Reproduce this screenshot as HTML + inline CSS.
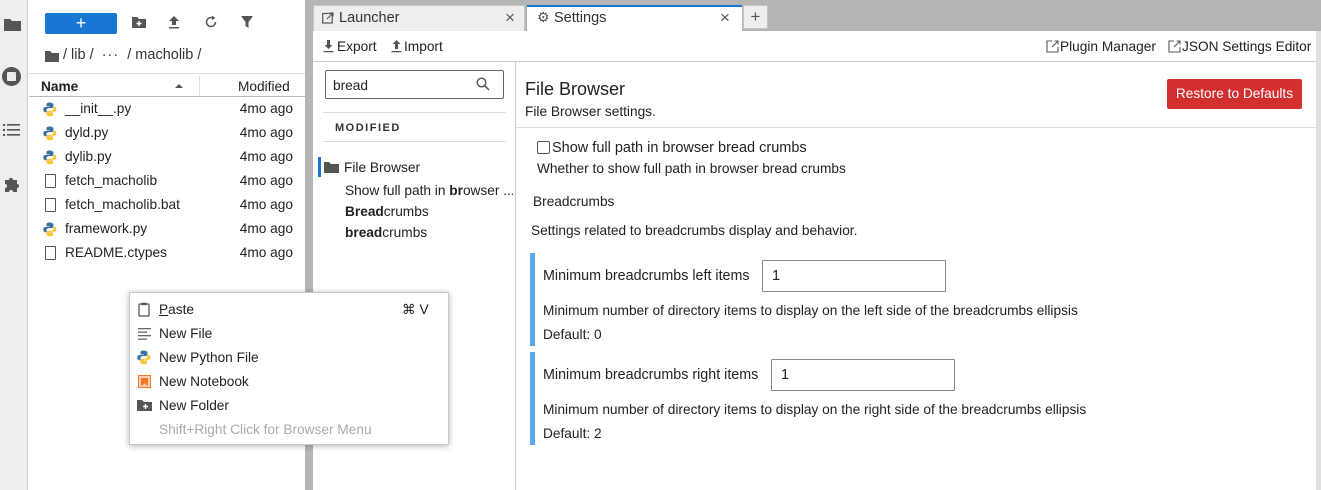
<!DOCTYPE html>
<html><head><style>
*{box-sizing:border-box;margin:0;padding:0}
body{width:1321px;height:490px;overflow:hidden;background:#fff;font-family:"Liberation Sans",sans-serif;font-size:13.7px;color:#222;position:relative}
.a{position:absolute}
.row{position:absolute;left:29px;width:276px;height:24px}
.row .n{position:absolute;left:36px;top:4px}
.row .m{position:absolute;right:12px;top:4px}
.py{position:absolute;left:14px;top:5px}
.fi{position:absolute;left:16px;top:5px;width:11px;height:14px;border:1.3px solid #555;border-radius:1px}
.mi{position:absolute;left:29px;font-size:13.7px}
</style></head><body>
<!-- left activity bar -->
<div class="a" style="left:0;top:0;width:28px;height:490px;background:#eeeeee;border-right:1px solid #ccc"></div>
<svg class="a" style="left:3px;top:16px" width="20" height="18"><path d="M1 3h6l2 2h9v10H1z" fill="#555"/></svg>
<div class="a" style="left:2px;top:67px;width:19px;height:19px;border-radius:50%;background:#555"></div>
<div class="a" style="left:7px;top:72px;width:9px;height:9px;background:#eee;border-radius:1px"></div>
<svg class="a" style="left:3px;top:123px" width="18" height="14"><g fill="#555"><rect x="0" y="1" width="2" height="2"/><rect x="0" y="6" width="2" height="2"/><rect x="0" y="11" width="2" height="2"/><rect x="4" y="1" width="13" height="1.6"/><rect x="4" y="6" width="13" height="1.6"/><rect x="4" y="11" width="13" height="1.6"/></g></svg>
<svg class="a" style="left:3px;top:175px" width="18" height="18"><path d="M2 5h4a2 2 0 1 1 4 0h4v4a2 2 0 1 1 0 4v4H10a2 2 0 1 0-4 0H2v-4a2 2 0 1 0 0-4z" fill="#555"/></svg>

<!-- file browser -->
<div class="a" style="left:45px;top:13px;width:72px;height:21px;background:#1976d2;border-radius:2px;color:#fff;text-align:center;font-size:18px;line-height:20px">+</div>
<svg class="a" style="left:131px;top:15px" width="16" height="14"><path d="M1 2h5l2 2h7v9H1z" fill="#555"/><path d="M8 6v5M5.5 8.5h5" stroke="#fff" stroke-width="1.5"/></svg>
<svg class="a" style="left:167px;top:14px" width="14" height="16"><path d="M7 2l5 5H9v4H5V7H2z M2 13h10v1.5H2z" fill="#555"/></svg>
<svg class="a" style="left:203px;top:14px" width="16" height="16"><path d="M12.5 8A4.5 4.5 0 1 1 10 4" fill="none" stroke="#555" stroke-width="1.5"/><path d="M9 1.5l3.5 2.5-3.5 2z" fill="#555"/></svg>
<svg class="a" style="left:240px;top:15px" width="14" height="14"><path d="M1 1h12L8.5 7v6L5.5 11V7z" fill="#555"/></svg>
<svg class="a" style="left:44px;top:49px" width="16" height="14"><path d="M1 2h5l2 2h7v9H1z" fill="#555"/></svg>
<div class="a" style="left:63px;top:47px;font-size:14.5px;color:#333">/ lib / &nbsp;<span style="letter-spacing:1px">···</span> &nbsp;/ macholib /</div>
<div class="a" style="left:29px;top:73px;width:276px;border-top:1px solid #ddd"></div>
<div class="a" style="left:41px;top:79px;font-weight:bold;font-size:13.7px">Name</div>
<div class="a" style="left:175px;top:84px;width:0;height:0;border-left:4px solid transparent;border-right:4px solid transparent;border-bottom:4px solid #555"></div>
<div class="a" style="left:199px;top:76px;height:20px;border-left:1px solid #ddd"></div>
<div class="a" style="left:238px;top:79px;font-size:13.7px">Modified</div>
<div class="a" style="left:29px;top:96px;width:276px;border-top:1px solid #bbb"></div>
<svg width="0" height="0" style="position:absolute"><defs><g id="py"><path d="M6.5 0.5c-3 0-3 1.3-3 2.3V4.5h3.2V5H2.3C1 5 0.3 6 0.3 7.5S1 10.2 2.3 10.2h1.2V8.3c0-1.3 1-2.2 2.2-2.2h3c1 0 1.8-.8 1.8-1.8V2.8c0-1-.9-2.3-4-2.3z" fill="#3b73a8"/><path d="M7.2 14.3c3 0 3-1.3 3-2.3v-1.7H7V9.8h4.4c1.3 0 2-1 2-2.5S12.7 4.6 11.4 4.6h-1.2v1.9c0 1.3-1 2.2-2.2 2.2H5c-1 0-1.8.8-1.8 1.8V12c0 1 .9 2.3 4 2.3z" fill="#f7c83e"/></g></defs></svg>
<div class="row" style="top:97px"><svg class="py" width="14" height="15"><use href="#py"/></svg><span class="n">__init__.py</span><span class="m">4mo ago</span></div>
<div class="row" style="top:121px"><svg class="py" width="14" height="15"><use href="#py"/></svg><span class="n">dyld.py</span><span class="m">4mo ago</span></div>
<div class="row" style="top:145px"><svg class="py" width="14" height="15"><use href="#py"/></svg><span class="n">dylib.py</span><span class="m">4mo ago</span></div>
<div class="row" style="top:169px"><div class="fi"></div><span class="n">fetch_macholib</span><span class="m">4mo ago</span></div>
<div class="row" style="top:193px"><div class="fi"></div><span class="n">fetch_macholib.bat</span><span class="m">4mo ago</span></div>
<div class="row" style="top:217px"><svg class="py" width="14" height="15"><use href="#py"/></svg><span class="n">framework.py</span><span class="m">4mo ago</span></div>
<div class="row" style="top:241px"><div class="fi"></div><span class="n">README.ctypes</span><span class="m">4mo ago</span></div>

<!-- splitter -->
<div class="a" style="left:305px;top:0;width:8px;height:490px;background:#b5b5b5"></div>
<!-- tab bar -->
<div class="a" style="left:313px;top:0;width:1008px;height:31px;background:#b5b5b5"></div>
<div class="a" style="left:313px;top:5px;width:212px;height:26px;background:#eeeeee;border:1px solid #c4c4c4;border-bottom:none"></div>
<svg class="a" style="left:322px;top:12px" width="12" height="12"><rect x="0.7" y="1.5" width="9.5" height="9.5" fill="none" stroke="#555" stroke-width="1.2"/><path d="M5 7L11 1M7.5 1H11V4.5" stroke="#555" stroke-width="1.2" fill="none"/></svg>
<div class="a" style="left:339px;top:10px;font-size:14.5px;color:#333">Launcher</div>
<div class="a" style="left:505px;top:8px;font-size:17px;color:#555">×</div>
<div class="a" style="left:527px;top:5px;width:215px;height:26px;background:#fff;border-top:2px solid #1976d2"></div>
<div class="a" style="left:537px;top:9px;font-size:14px;color:#555">⚙</div>
<div class="a" style="left:554px;top:10px;font-size:14.5px;color:#333">Settings</div>
<div class="a" style="left:720px;top:8px;font-size:17px;color:#555">×</div>
<div class="a" style="left:743px;top:5px;width:25px;height:24px;background:#eeeeee;border:1px solid #c4c4c4;text-align:center;font-size:17px;line-height:22px;color:#555">+</div>
<!-- main -->
<div class="a" style="left:313px;top:31px;width:1003px;height:459px;background:#fff"></div>
<div class="a" style="left:1316px;top:31px;width:5px;height:459px;background:#e0e0e0"></div>
<svg class="a" style="left:323px;top:40px" width="11" height="13"><path d="M5.5 9L1.5 5h2.5V0h3v5h2.5z M0.5 11h10v1.3H0.5z" fill="#555"/></svg>
<div class="a" style="left:337px;top:39px">Export</div>
<svg class="a" style="left:391px;top:40px" width="11" height="13"><path d="M5.5 0L1.5 4h2.5v5h3V4h2.5z M0.5 11h10v1.3H0.5z" fill="#555"/></svg>
<div class="a" style="left:404px;top:39px">Import</div>
<svg class="a" style="left:1046px;top:40px" width="13" height="13"><path d="M6 1H1v11h11V7" fill="none" stroke="#555" stroke-width="1.1"/><path d="M6 7l6-6M8.5 1H12v3.5" fill="none" stroke="#555" stroke-width="1.1"/></svg>
<div class="a" style="left:1060px;top:39px">Plugin Manager</div>
<svg class="a" style="left:1168px;top:40px" width="13" height="13"><path d="M6 1H1v11h11V7" fill="none" stroke="#555" stroke-width="1.1"/><path d="M6 7l6-6M8.5 1H12v3.5" fill="none" stroke="#555" stroke-width="1.1"/></svg>
<div class="a" style="left:1182px;top:39px">JSON Settings Editor</div>
<div class="a" style="left:313px;top:61px;width:1003px;border-top:1px solid #ccc"></div>
<!-- settings left -->
<div class="a" style="left:515px;top:62px;height:428px;border-left:1px solid #ccc"></div>
<div class="a" style="left:325px;top:70px;width:179px;height:29px;border:1px solid #666;border-radius:2px"></div>
<div class="a" style="left:333px;top:78px">bread</div>
<svg class="a" style="left:476px;top:77px" width="14" height="14"><circle cx="5.5" cy="5.5" r="4.3" fill="none" stroke="#555" stroke-width="1.4"/><path d="M8.7 8.7L13 13" stroke="#555" stroke-width="1.5"/></svg>
<div class="a" style="left:323px;top:112px;width:183px;border-top:1px solid #ddd"></div>
<div class="a" style="left:335px;top:122px;font-size:11px;font-weight:bold;letter-spacing:1.5px;color:#333">MODIFIED</div>
<div class="a" style="left:323px;top:141px;width:183px;border-top:1px solid #ddd"></div>
<div class="a" style="left:318px;top:157px;width:3px;height:20px;background:#1976d2"></div>
<svg class="a" style="left:324px;top:161px" width="16" height="13"><path d="M0 1h5l2 2h8v9H0z" fill="#555"/></svg>
<div class="a" style="left:344px;top:160px">File Browser</div>
<div class="a" style="left:345px;top:183px;white-space:nowrap;width:168px;overflow:hidden">Show full path in <b>br</b>owser ...</div>
<div class="a" style="left:345px;top:204px"><b>Bread</b>crumbs</div>
<div class="a" style="left:345px;top:225px"><b>bread</b>crumbs</div>
<!-- settings right -->
<div class="a" style="left:525px;top:79px;font-size:18px">File Browser</div>
<div class="a" style="left:525px;top:104px">File Browser settings.</div>
<div class="a" style="left:1167px;top:79px;width:135px;height:30px;background:#d32f2f;border-radius:2px;color:#fff;font-size:13.7px;text-align:center;line-height:30px">Restore to Defaults</div>
<div class="a" style="left:516px;top:127px;width:800px;border-top:1px solid #ddd"></div>
<div class="a" style="left:537px;top:141px;width:13px;height:13px;border:1px solid #555;border-radius:2px"></div>
<div class="a" style="left:552px;top:140px;font-size:14.5px">Show full path in browser bread crumbs</div>
<div class="a" style="left:537px;top:161px">Whether to show full path in browser bread crumbs</div>
<div class="a" style="left:533px;top:194px">Breadcrumbs</div>
<div class="a" style="left:531px;top:223px">Settings related to breadcrumbs display and behavior.</div>
<div class="a" style="left:530px;top:253px;width:5px;height:93px;background:#5aa9ee"></div>
<div class="a" style="left:543px;top:268px;font-size:14.3px">Minimum breadcrumbs left items</div>
<div class="a" style="left:762px;top:260px;width:184px;height:32px;border:1px solid #888;border-radius:1px;padding:7px 9px;font-size:14.5px">1</div>
<div class="a" style="left:543px;top:303px">Minimum number of directory items to display on the left side of the breadcrumbs ellipsis</div>
<div class="a" style="left:543px;top:327px">Default: 0</div>
<div class="a" style="left:530px;top:352px;width:5px;height:93px;background:#5aa9ee"></div>
<div class="a" style="left:543px;top:367px;font-size:14.3px">Minimum breadcrumbs right items</div>
<div class="a" style="left:771px;top:359px;width:184px;height:32px;border:1px solid #888;border-radius:1px;padding:7px 9px;font-size:14.5px">1</div>
<div class="a" style="left:543px;top:402px">Minimum number of directory items to display on the right side of the breadcrumbs ellipsis</div>
<div class="a" style="left:543px;top:426px">Default: 2</div>

<!-- context menu -->
<div class="a" style="left:129px;top:292px;width:320px;height:153px;background:#fff;border:1px solid #c8c8c8;box-shadow:0 1px 6px rgba(0,0,0,.3)">
 <svg class="a" style="left:8px;top:9px" width="12" height="15"><rect x="1" y="2" width="10" height="12" fill="none" stroke="#555" stroke-width="1.3" rx="1"/><rect x="3.5" y="0.7" width="5" height="2.5" fill="#555"/></svg>
 <div class="mi" style="top:9px"><u>P</u>aste</div>
 <div class="a" style="left:272px;top:9px">⌘ V</div>
 <svg class="a" style="left:8px;top:35px" width="13" height="12"><g fill="#666"><rect y="0" width="13" height="1.3"/><rect y="3.5" width="9" height="1.3"/><rect y="7" width="13" height="1.3"/><rect y="10.5" width="9" height="1.3"/></g></svg>
 <div class="mi" style="top:33px">New File</div>
 <svg class="a" style="left:7px;top:57px" width="14" height="15"><use href="#py"/></svg>
 <div class="mi" style="top:57px">New Python File</div>
 <div class="a" style="left:8px;top:82px;width:13px;height:13px;border:1.5px solid #f37726;background:#fbd2b6"></div>
 <svg class="a" style="left:11px;top:85px" width="7" height="8"><path d="M0 0h7v8L3.5 5.5 0 8z" fill="#f37726"/></svg>
 <div class="mi" style="top:81px">New Notebook</div>
 <svg class="a" style="left:7px;top:106px" width="15" height="13"><path d="M0 1h5l2 2h8v9H0z" fill="#555"/><path d="M8.5 5v5M6 7.5h5" stroke="#fff" stroke-width="1.4"/></svg>
 <div class="mi" style="top:105px">New Folder</div>
 <div class="mi" style="top:129px;color:#aaa">Shift+Right Click for Browser Menu</div>
</div>
</body></html>
